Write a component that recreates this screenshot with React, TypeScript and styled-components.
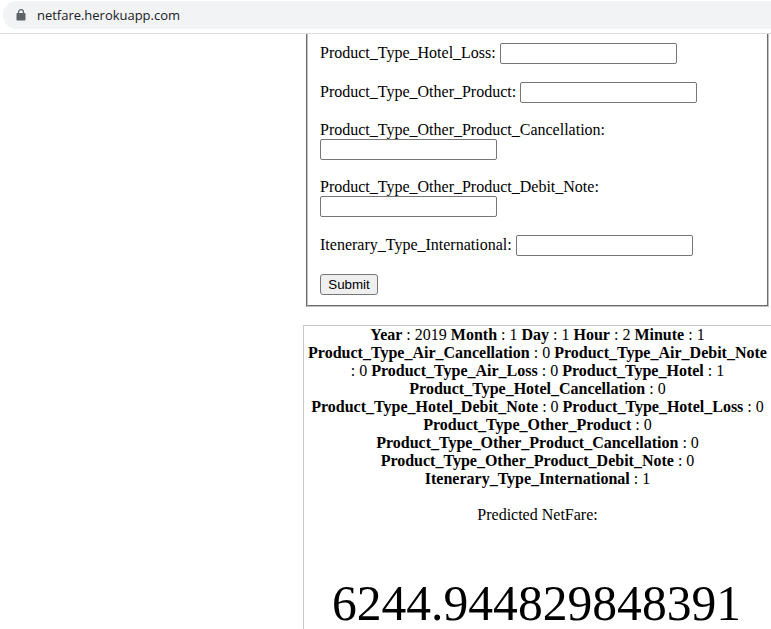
import React from "react";
import styled, { createGlobalStyle } from "styled-components";

const GlobalStyle = createGlobalStyle`
  html, body { margin: 0; height: 100%; overflow: hidden; background: #fff; }
`;

const Screen = styled.div`
  display: flex;
  flex-direction: column;
  width: 771px;
  height: 629px;
  overflow: hidden;
  font: 16px/18px "Liberation Serif", "Times New Roman", serif;
  color: #000;
`;

const Toolbar = styled.header`
  box-sizing: border-box;
  flex: none;
  height: 34px;
  padding: 1px 0 4px 3px;
  border-bottom: 1px solid #dadce0;
`;

const AddressBar = styled.div`
  display: flex;
  align-items: center;
  gap: 11px;
  height: 28px;
  padding-left: 13px;
  border-radius: 14px 0 0 14px;
  background: #f1f3f4;
`;

const LockIcon = styled.svg`
  flex: none;
  width: 10px;
  height: 12px;
  margin-top: -1px;
`;

const Address = styled.span`
  font: 13px/18px "Open Sans", "Noto Sans", sans-serif;
  letter-spacing: -0.02px;
  color: #202124;
`;

const Page = styled.main`
  flex: 1;
  min-height: 0;
  display: flex;
  flex-direction: column;
  gap: 18px;
  margin-left: 303px;
  overflow: hidden;
`;

const FareForm = styled.form`
  box-sizing: border-box;
  flex: none;
  display: flex;
  flex-direction: column;
  align-items: flex-start;
  gap: 18px;
  width: 463px;
  margin-left: 3px;
  padding: 9px 12px 10px;
  border: 2px groove #c0c0c0;
  border-top: 0;
`;

const Field = styled.label<{ $stacked?: boolean }>`
  display: flex;
  flex-direction: ${(p) => (p.$stacked ? "column" : "row")};
  align-items: flex-start;
  gap: ${(p) => (p.$stacked ? "0" : "4px")};
  white-space: nowrap;
`;

const FieldName = styled.span<{ $stacked?: boolean }>`
  padding-top: ${(p) => (p.$stacked ? "0" : "1px")};
`;

const TextInput = styled.input`
  box-sizing: border-box;
  width: 177px;
  height: 21px;
  margin: 0;
  padding: 1px 2px;
  border: 1px solid #767676;
  border-radius: 2px;
  background: #fff;
  outline: none;
`;

const SubmitButton = styled.button`
  box-sizing: border-box;
  width: 58px;
  height: 21px;
  padding: 0;
  border: 1px solid #767676;
  border-radius: 3px;
  background: #efefef;
  color: #000;
  font: 13.333px/17px "Liberation Sans", Arial, sans-serif;
`;

const Result = styled.section`
  box-sizing: border-box;
  flex: 1;
  width: 469px;
  border: 1px solid #c8c8c8;
  border-bottom: 0;
  text-align: center;
`;

const Summary = styled.div`
  white-space: nowrap;
`;

const Caption = styled.div`
  margin-top: 18px;
`;

const Prediction = styled.div`
  margin-top: 55px;
  padding-right: 2px;
  font-size: 49.6px;
  line-height: 50px;
`;

const fields = [
  { name: "Product_Type_Hotel_Loss" },
  { name: "Product_Type_Other_Product" },
  { name: "Product_Type_Other_Product_Cancellation", stacked: true },
  { name: "Product_Type_Other_Product_Debit_Note", stacked: true },
  { name: "Itenerary_Type_International" },
];

export default function App() {
  return (
    <Screen>
      <GlobalStyle />
      <Toolbar>
        <AddressBar>
          <LockIcon viewBox="0 0 10 12">
            <path d="M2.5 5V3.2a2.5 2.5 0 0 1 5 0V5" fill="none" stroke="#5f6368" strokeWidth="1.2" />
            <rect x="0.5" y="4" width="9" height="7.5" rx="0.8" fill="#5f6368" />
          </LockIcon>
          <Address>netfare.herokuapp.com</Address>
        </AddressBar>
      </Toolbar>
      <Page>
        <FareForm onSubmit={(e) => e.preventDefault()}>
          {fields.map((f) => (
            <Field key={f.name} $stacked={f.stacked}>
              <FieldName $stacked={f.stacked}>{f.name}:</FieldName>
              <TextInput name={f.name} />
            </Field>
          ))}
          <SubmitButton type="submit">Submit</SubmitButton>
        </FareForm>
        <Result>
          <Summary><b>Year</b> : 2019 <b>Month</b> : 1 <b>Day</b> : 1 <b>Hour</b> : 2 <b>Minute</b> : 1</Summary>
          <Summary><b>Product_Type_Air_Cancellation</b> : 0 <b>Product_Type_Air_Debit_Note</b></Summary>
          <Summary>: 0 <b>Product_Type_Air_Loss</b> : 0 <b>Product_Type_Hotel</b> : 1</Summary>
          <Summary><b>Product_Type_Hotel_Cancellation</b> : 0</Summary>
          <Summary><b>Product_Type_Hotel_Debit_Note</b> : 0 <b>Product_Type_Hotel_Loss</b> : 0</Summary>
          <Summary><b>Product_Type_Other_Product</b> : 0</Summary>
          <Summary><b>Product_Type_Other_Product_Cancellation</b> : 0</Summary>
          <Summary><b>Product_Type_Other_Product_Debit_Note</b> : 0</Summary>
          <Summary><b>Itenerary_Type_International</b> : 1</Summary>
          <Caption>Predicted NetFare:</Caption>
          <Prediction>6244.944829848391</Prediction>
        </Result>
      </Page>
    </Screen>
  );
}
